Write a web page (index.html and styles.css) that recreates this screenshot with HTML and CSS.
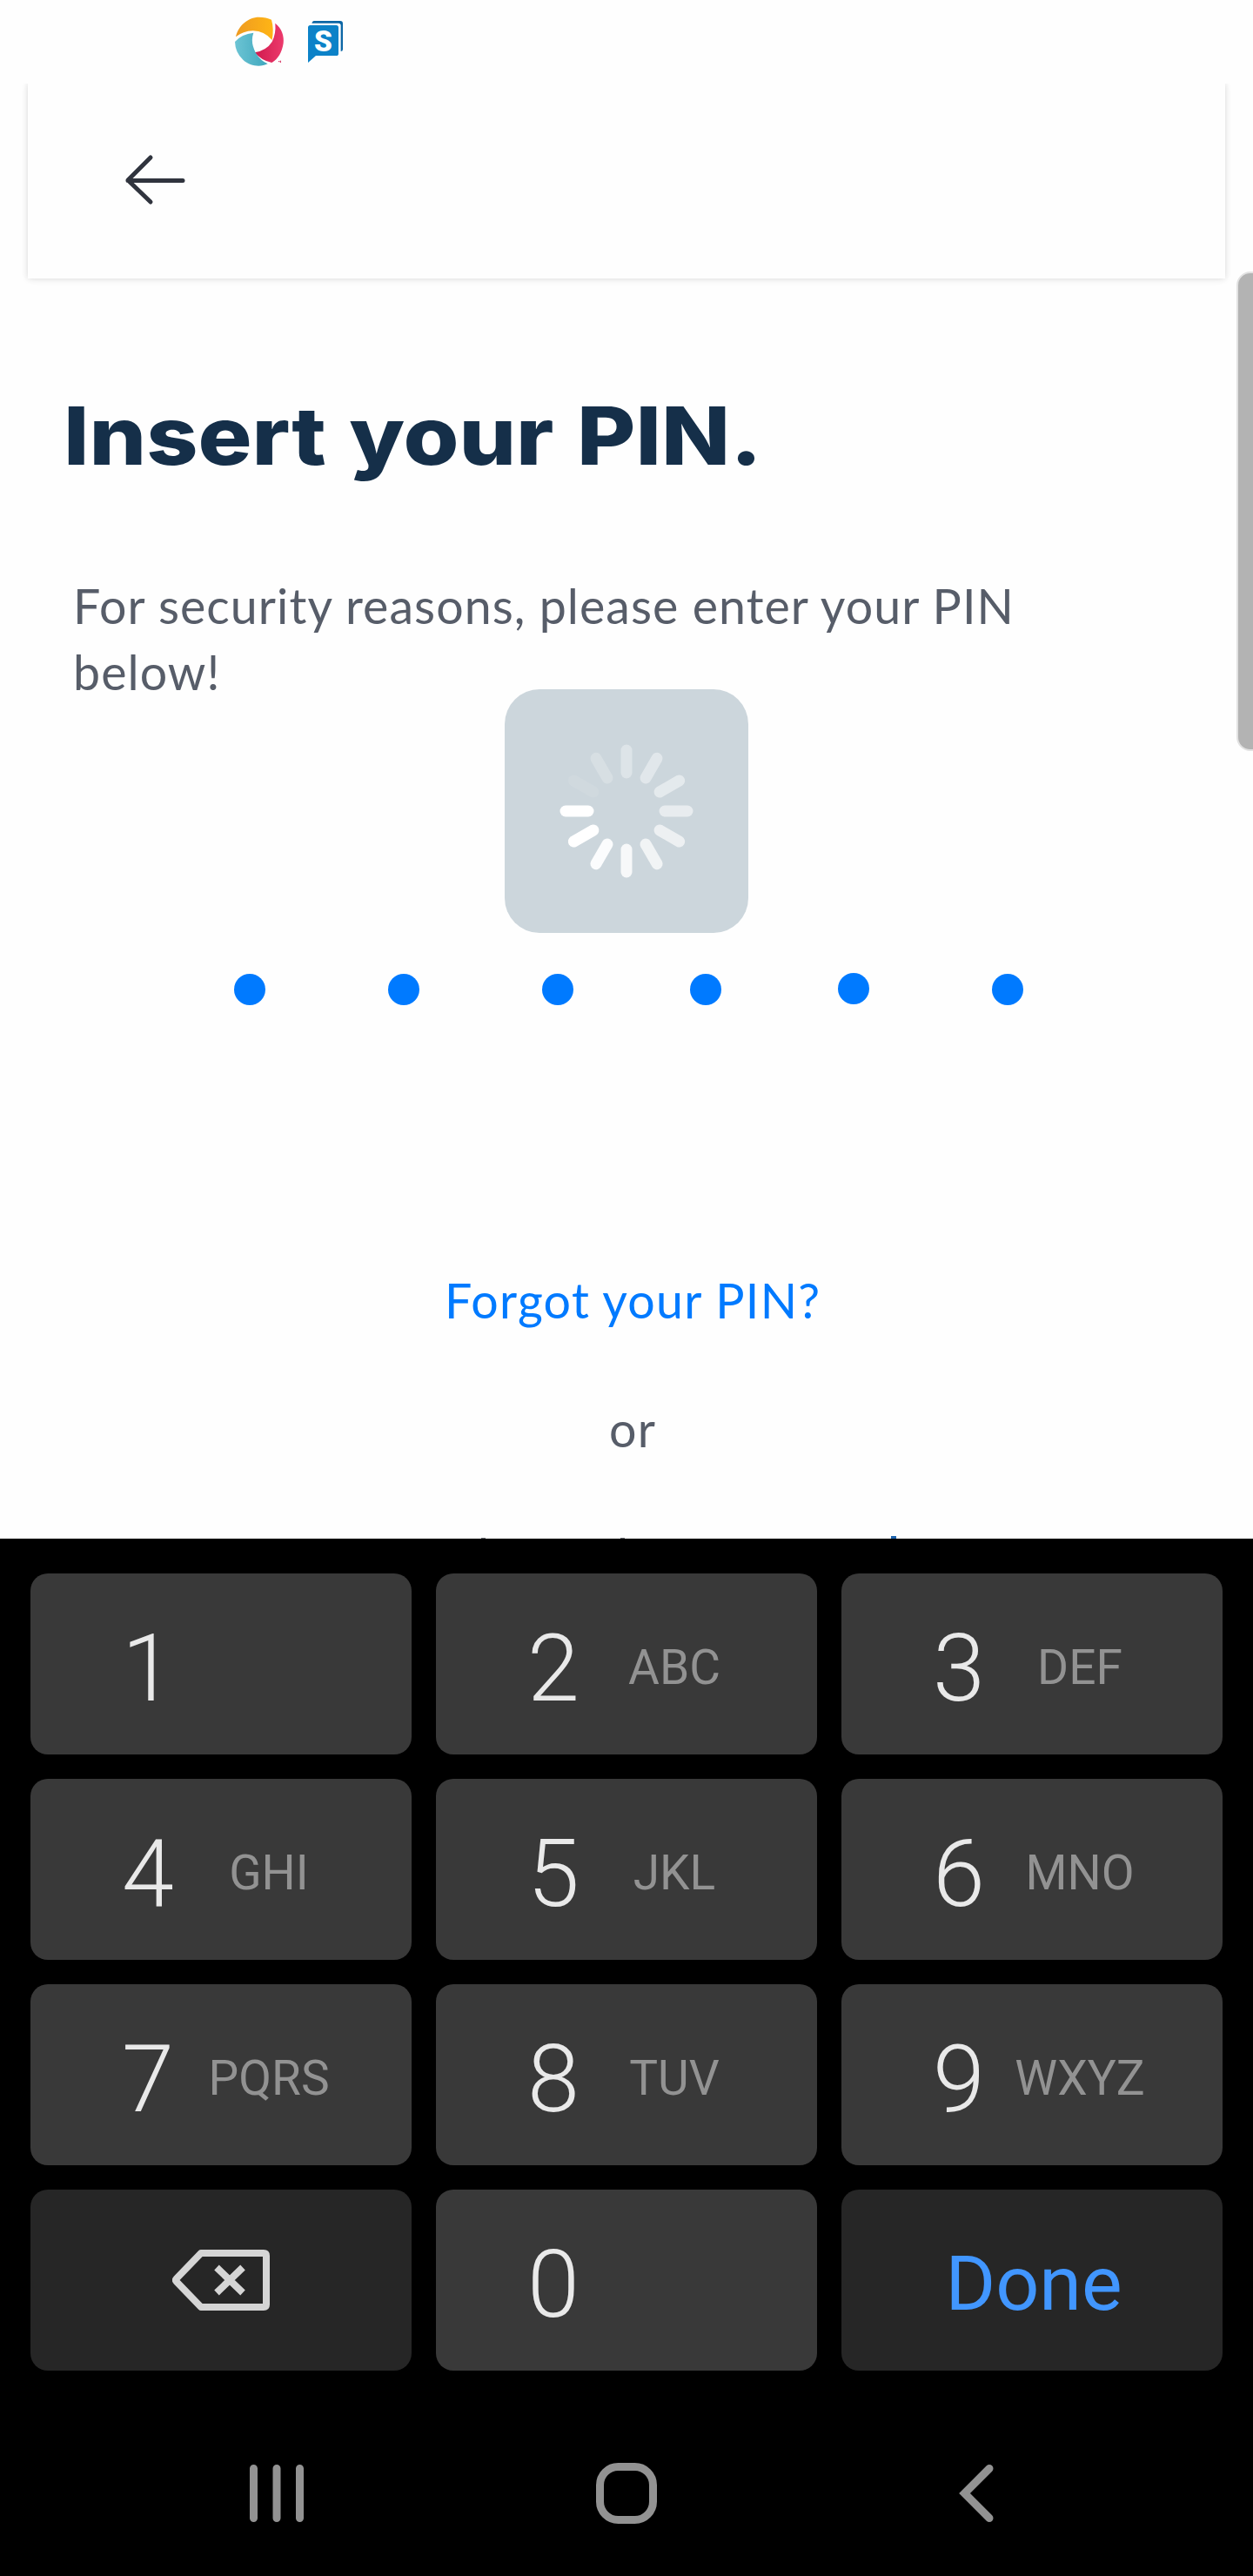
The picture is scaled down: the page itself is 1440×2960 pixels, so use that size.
FILE: index.html
```html
<!DOCTYPE html>
<html lang="en">
<head>
<meta charset="utf-8">
<title>Insert your PIN</title>
<link rel="stylesheet" href="styles.css">
</head>
<body>
<div class="screen">
  <div class="status">
    <svg class="status-swirl" viewBox="87 57 174 174">
      <defs>
        <linearGradient id="gy" x1="0" x2="1"><stop offset="0" stop-color="#ee9a21"/><stop offset="1" stop-color="#ffb515"/></linearGradient>
        <linearGradient id="gr" x1="0" x2="1"><stop offset="0" stop-color="#d01a4e"/><stop offset="1" stop-color="#ec3a6c"/></linearGradient>
        <linearGradient id="gb" x1="0" x2="1"><stop offset="0" stop-color="#6cc4d4"/><stop offset="1" stop-color="#3fa7bd"/></linearGradient>
      </defs>
      <path fill="url(#gy)" d="M93 127C100 90 135 59 173 59Q198 59 216 68Q225 98 218 138Q192 107 152 106Q118 107 93 127Z"/>
      <path fill="url(#gr)" d="M229 80C252 98 260 125 257 149C252 180 239 203 217 216Q181 209 158 181Q199 174 218 144Q232 116 229 80Z"/>
      <path fill="url(#gb)" d="M90 144Q113 117 154 113Q142 146 162 183Q179 210 203 220C178 232 142 229 118 206Q91 182 90 144Z"/>
      <path stroke="#d01a4e" stroke-width="3" d="M240 212h4M247 209v7"/>
    </svg>
    <svg class="status-chat" viewBox="339 69 126 150">
      <path fill="#0b66a5" d="M362 72H453Q462 72 462 81V170Q462 177 455 177V88Q455 80 447 80H355Q357 72 362 72Z"/>
      <path fill="#0c82c8" d="M350 87H439Q447 87 447 95V185Q447 192 439 192H369L342 216V95Q342 87 350 87Z"/>
      <text class="chat-letter" x="394" y="176" text-anchor="middle">S</text>
    </svg>
  </div>
  <div class="header">
    <svg class="back" viewBox="0 0 72 60"><path d="M30 4L4 30L30 55M4 30.500H67"/></svg>
  </div>
  <main class="content">
    <h1 class="title">Insert your PIN.</h1>
    <p class="lead">For security reasons, please enter your PIN below!</p>
    <div class="pins">
      <span class="dot"></span><span class="dot"></span><span class="dot"></span><span class="dot near"></span><span class="dot near raised"></span><span class="dot"></span>
    </div>
    <a class="forgot">Forgot your PIN?</a>
    <p class="or">or</p>
    <div class="clipped"><i></i><i></i><i></i></div>
    <div class="loader">
      <svg class="spinner" viewBox="-80 -80 160 160">
        <path d="M-70 0H-44"/>
        <path d="M-70 0H-44" transform="rotate(30)" opacity=".08"/>
        <path d="M-70 0H-44" transform="rotate(60)" opacity=".22"/>
        <path d="M-70 0H-44" transform="rotate(90)" opacity=".34"/>
        <path d="M-70 0H-44" transform="rotate(120)" opacity=".42"/>
        <path d="M-70 0H-44" transform="rotate(150)" opacity=".48"/>
        <path d="M-70 0H-44" transform="rotate(180)" opacity=".54"/>
        <path d="M-70 0H-44" transform="rotate(210)" opacity=".64"/>
        <path d="M-70 0H-44" transform="rotate(240)" opacity=".72"/>
        <path d="M-70 0H-44" transform="rotate(270)" opacity=".83"/>
        <path d="M-70 0H-44" transform="rotate(300)" opacity=".92"/>
        <path d="M-70 0H-44" transform="rotate(330)"/>
      </svg>
    </div>
  </main>
  <section class="keyboard">
    <div class="keys">
      <div class="key"><span class="num">1</span></div>
      <div class="key"><span class="num">2</span><span class="abc">ABC</span></div>
      <div class="key"><span class="num">3</span><span class="abc">DEF</span></div>
      <div class="key"><span class="num">4</span><span class="abc">GHI</span></div>
      <div class="key"><span class="num">5</span><span class="abc">JKL</span></div>
      <div class="key"><span class="num">6</span><span class="abc">MNO</span></div>
      <div class="key"><span class="num">7</span><span class="abc">PQRS</span></div>
      <div class="key"><span class="num">8</span><span class="abc">TUV</span></div>
      <div class="key"><span class="num">9</span><span class="abc">WXYZ</span></div>
      <div class="key action">
        <svg class="erase" viewBox="198 2585 112 70"><path d="M231 2589H303Q306 2589 306 2592V2648Q306 2651 303 2651H231L203 2622Q201 2620 203 2618Z"/><path class="cross" d="M249 2605.500L279 2634.500M279 2605.500L249 2634.500"/></svg>
      </div>
      <div class="key"><span class="num">0</span></div>
      <div class="key action done">Done</div>
    </div>
    <nav class="nav">
      <svg class="nav-recents" viewBox="0 0 62 66"><path d="M4.500 4.500V61.500M31 4.500V61.500M57.500 4.500V61.500"/></svg>
      <svg class="nav-home" viewBox="0 0 70 70"><rect x="4.500" y="4.500" width="61" height="61" rx="21"/></svg>
      <svg class="nav-back" viewBox="0 0 40 68"><path d="M35 5.500L6.500 34L35 62.500"/></svg>
    </nav>
  </section>
  <div class="edge-handle"></div>
</div>
</body>
</html>
```
FILE: styles.css
```css
* { box-sizing: border-box; }
body { margin: 0; background: #fefefe; }
h1, p { margin: 0; }
svg { display: block; fill: none; }
.screen {
  position: relative;
  width: 1440px;
  height: 2960px;
  overflow: hidden;
  display: flex;
  flex-direction: column;
  background: #fefefe;
}
.status {
  position: relative;
  z-index: 1;
  height: 96px;
  display: flex;
  align-items: flex-start;
  gap: 26px;
  padding: 19px 0 0 269px;
  background: #fefefe;
}
.status-swirl { width: 58px; height: 58px; }
.status-chat { width: 42px; height: 50px; margin-top: 4px; }
.chat-letter { font: 900 100px "Roboto", sans-serif; fill: #fff; }
.header {
  height: 224px;
  margin: 0 32px;
  padding: 81px 0 0 111px;
  box-shadow: 0 0 7px rgba(0,0,0,.15), 0 2px 16px rgba(0,0,0,.02);
}
.back { width: 72px; height: 60px; stroke: #30343e; stroke-width: 5; stroke-linecap: round; stroke-linejoin: round; }
.content {
  position: relative;
  height: 1448px;
  display: flex;
  flex-direction: column;
}
.title {
  margin: 125px 0 0 73px;
  width: 1000px;
  height: 112px;
  font: 800 92px/112px "Inter", sans-serif;
  word-spacing: 3.500px;
  color: #152f49;
  transform: scaleX(1.124);
  transform-origin: 0 0;
  white-space: nowrap;
}
.lead {
  margin: 101px 0 0 84px;
  width: 1200px;
  height: 152px;
  font: 400 55.500px/76px "Lato", sans-serif;
  letter-spacing: 1.050px;
  color: #575d69;
}
.pins {
  display: flex;
  gap: 141px;
  margin: 309px 0 0 269px;
}
.dot { width: 36px; height: 36px; border-radius: 50%; background: #007aff; }
.near { margin-left: -7px; }
.raised { margin-top: -1px; }
.forgot, .or {
  font: 400 55.500px/76px "Lato", sans-serif;
  letter-spacing: 1.300px;
}
.forgot { margin: 301px 0 0 511px; color: #007aff; white-space: nowrap; }
.or { margin: 72px 0 0 700px; color: #575d69; }
.clipped {
  display: flex;
  align-items: flex-end;
  gap: 155px;
  margin: auto 0 0 553px;
}
.clipped i { width: 5px; height: 1px; background: #6c6f74; }
.clipped i:last-child { width: 6px; height: 3px; margin-left: 151px; background: #1d63ad; }
.loader {
  position: absolute;
  left: 580px;
  top: 472px;
  width: 280px;
  height: 280px;
  border-radius: 40px;
  background: #ccd6dc;
  display: grid;
  place-items: center;
}
.spinner { width: 160px; height: 160px; stroke: #fff; stroke-width: 13; stroke-linecap: round; }
.keyboard {
  height: 1192px;
  padding: 40px 35px 0;
  background: #000;
  font-family: "Roboto", sans-serif;
}
.keys {
  display: grid;
  grid-template-columns: repeat(3, 438px);
  grid-auto-rows: 208px;
  gap: 28px;
}
.key {
  display: flex;
  align-items: center;
  padding-left: 85px;
  border-radius: 20px;
  background: #393939;
}
.num { width: 100px; text-align: center; font-size: 108px; line-height: 128px; font-weight: 300; color: #e9e9e9; padding-top: 10px; }
.abc { width: 178px; text-align: center; font-size: 55px; line-height: 64px; color: #929292; padding-top: 7px; }
.action { justify-content: center; padding-left: 0; background: #262626; }
.done { font-size: 88px; color: #4196ff; padding: 6px 0 0 4px; }
.erase { width: 112px; height: 70px; stroke: #d5d5d5; stroke-width: 8; stroke-linejoin: round; }
.nav {
  display: flex;
  align-items: center;
  height: 70px;
  margin: 106px 0 0 252px;
}
.nav svg { stroke: #929292; stroke-width: 9; stroke-linecap: round; }
.nav-recents { width: 62px; height: 66px; }
.nav-home { width: 70px; height: 70px; margin: 0 347px 0 336px; }
.nav-back { width: 40px; height: 68px; }
.edge-handle {
  position: absolute;
  left: 1421px;
  top: 312px;
  width: 40px;
  height: 551px;
  border: 2px solid #e2e2e2;
  border-radius: 16px;
  background: #b3b3b3;
}
```
